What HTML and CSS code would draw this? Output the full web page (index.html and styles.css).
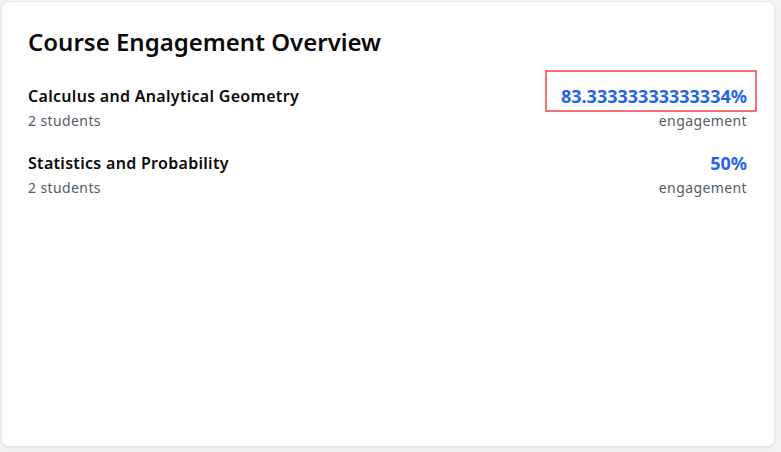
FILE: index.html
```html
<!DOCTYPE html>
<html lang="en">
<head>
<meta charset="utf-8">
<title>Course Engagement Overview</title>
<link rel="stylesheet" href="styles.css">
</head>
<body>
  <div class="card">
    <h2 class="title">Course Engagement Overview</h2>
    <div class="list">
      <div class="item">
        <div class="info">
          <div class="name">Calculus and Analytical Geometry</div>
          <div class="meta">2 students</div>
        </div>
        <div class="stat">
          <div class="value highlighted">83.33333333333334%</div>
          <div class="meta">engagement</div>
        </div>
      </div>
      <div class="item">
        <div class="info">
          <div class="name">Statistics and Probability</div>
          <div class="meta">2 students</div>
        </div>
        <div class="stat">
          <div class="value">50%</div>
          <div class="meta">engagement</div>
        </div>
      </div>
    </div>
  </div>
</body>
</html>
```

FILE: styles.css
```css
* { box-sizing: border-box; }
html, body { height: 100%; }
body {
  margin: 0;
  padding: 1px 6px 5px 1px;
  background: #f3f3f3;
  font-family: "Noto Sans", "Open Sans", sans-serif;
  color: #111;
}
.card {
  height: 100%;
  background: #fff;
  border: 1px solid #e6e6e6;
  border-radius: 8px;
  box-shadow: 0 1px 2px rgba(0,0,0,0.08);
  padding: 24px 27px 25px 26px;
}
.title {
  margin: 0 0 16px;
  font-size: 24px;
  line-height: 32px;
  font-weight: 600;
  color: #0a0a0a;
}
.list { display: flex; flex-direction: column; }
.item {
  display: flex;
  justify-content: space-between;
  align-items: flex-start;
  padding: 10px 0;
}
.name {
  font-size: 16px;
  line-height: 24px;
  font-weight: 600;
  letter-spacing: 0.3px;
  color: #0a0a0a;
}
.meta {
  margin-top: 3px;
  font-size: 14px;
  line-height: 20px;
  letter-spacing: 0.4px;
  color: #555b66;
}
.stat { text-align: right; }
.value {
  font-size: 18px;
  line-height: 24px;
  font-weight: 700;
  color: #2563eb;
  position: relative;
}
.highlighted::after {
  content: "";
  position: absolute;
  left: -16px;
  right: -10px;
  top: -14px;
  bottom: -4px;
  border: 2px solid #f07274;
}
```
